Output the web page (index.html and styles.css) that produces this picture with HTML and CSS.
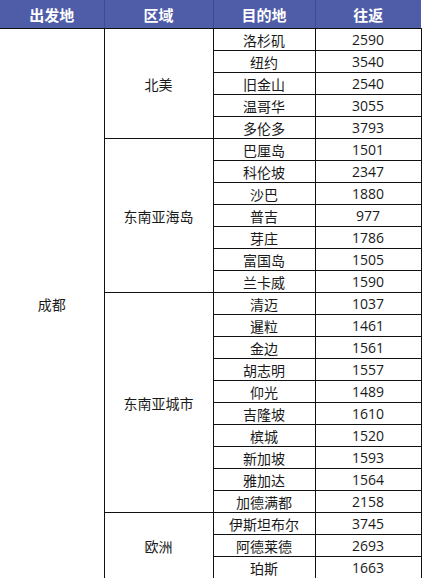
FILE: index.html
```html
<!DOCTYPE html>
<html lang="zh">
<head>
<meta charset="utf-8">
<link rel="stylesheet" href="styles.css">
</head>
<body>
<table class="fares">
  <colgroup>
    <col class="c1"><col class="c2"><col class="c3"><col class="c4">
  </colgroup>
  <thead>
    <tr class="head"><th>出发地</th><th>区域</th><th>目的地</th><th>往返</th></tr>
  </thead>
  <tbody>
    <tr><td class="city" rowspan="25">成都</td><td class="region" rowspan="5">北美</td><td>洛杉矶</td><td class="num">2590</td></tr>
    <tr><td>纽约</td><td class="num">3540</td></tr>
    <tr><td>旧金山</td><td class="num">2540</td></tr>
    <tr><td>温哥华</td><td class="num">3055</td></tr>
    <tr><td>多伦多</td><td class="num">3793</td></tr>
    <tr><td class="region" rowspan="7">东南亚海岛</td><td>巴厘岛</td><td class="num">1501</td></tr>
    <tr><td>科伦坡</td><td class="num">2347</td></tr>
    <tr><td>沙巴</td><td class="num">1880</td></tr>
    <tr><td>普吉</td><td class="num">977</td></tr>
    <tr><td>芽庄</td><td class="num">1786</td></tr>
    <tr><td>富国岛</td><td class="num">1505</td></tr>
    <tr><td>兰卡威</td><td class="num">1590</td></tr>
    <tr><td class="region" rowspan="10">东南亚城市</td><td>清迈</td><td class="num">1037</td></tr>
    <tr><td>暹粒</td><td class="num">1461</td></tr>
    <tr><td>金边</td><td class="num">1561</td></tr>
    <tr><td>胡志明</td><td class="num">1557</td></tr>
    <tr><td>仰光</td><td class="num">1489</td></tr>
    <tr><td>吉隆坡</td><td class="num">1610</td></tr>
    <tr><td>槟城</td><td class="num">1520</td></tr>
    <tr><td>新加坡</td><td class="num">1593</td></tr>
    <tr><td>雅加达</td><td class="num">1564</td></tr>
    <tr><td>加德满都</td><td class="num">2158</td></tr>
    <tr><td class="region" rowspan="3">欧洲</td><td>伊斯坦布尔</td><td class="num">3745</td></tr>
    <tr><td>阿德莱德</td><td class="num">2693</td></tr>
    <tr><td>珀斯</td><td class="num">1663</td></tr>
  </tbody>
</table>
</body>
</html>
```
FILE: styles.css
```css
html, body {
  margin: 0;
  padding: 0;
  background: #ffffff;
}
.fares {
  width: 421px;
  border-collapse: collapse;
  table-layout: fixed;
  font-family: "Noto Sans CJK SC", "Microsoft YaHei", sans-serif;
  color: #1a1a1a;
}
.c1 { width: 104px; }
.c2 { width: 109px; }
.c3 { width: 102px; }
.c4 { width: 106px; }
.head th {
  height: 28px;
  padding: 0;
  background: #4f5da9;
  color: #ffffff;
  font-size: 15px;
  font-weight: bold;
  text-align: center;
  vertical-align: middle;
  border-left: 1px solid #3e4a8e;
  border-bottom: 1px solid #111;
  line-height: 1;
}
.head th:first-child { border-left: none; }
tbody td {
  height: 21px;
  padding: 0;
  font-size: 14px;
  line-height: 1;
  text-align: center;
  vertical-align: middle;
  border: 1px solid #111;
}
tbody td.city {
  border-left: none;
  border-top: none;
  border-bottom: none;
}
tbody td.num {
  font-family: "Open Sans", "Noto Sans", sans-serif;
  font-size: 14px;
}
```
